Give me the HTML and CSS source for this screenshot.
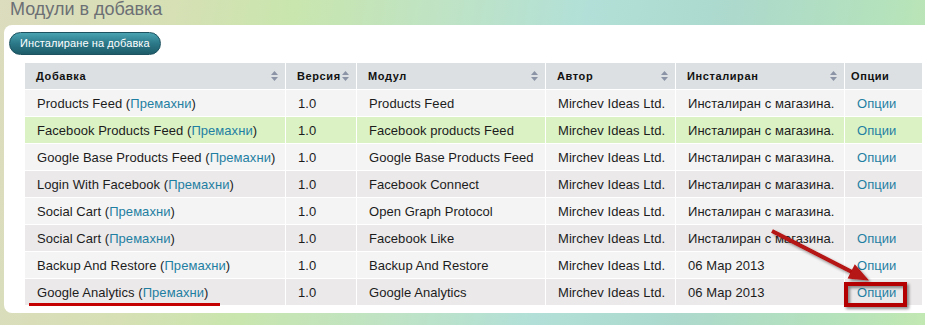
FILE: index.html
```html
<!DOCTYPE html>
<html lang="bg">
<head>
<meta charset="utf-8">
<title>Модули в добавка</title>
<link rel="stylesheet" href="styles.css">
</head>
<body>
<div class="page">
  <h1 class="title">Модули в добавка</h1>
  <div class="panel">
    <button class="btn" type="button">Инсталиране на добавка</button>
    <table class="grid">
      <colgroup>
        <col class="c1"><col class="c2"><col class="c3"><col class="c4"><col class="c5"><col class="c6">
      </colgroup>
      <thead>
        <tr>
          <th><div class="th-in"><span>Добавка</span><svg class="sort" viewBox="0 0 7 10" width="7" height="10"><path d="M3.5 0L7 4H0Z M0 6H7L3.5 10Z"/></svg></div></th>
          <th><div class="th-in"><span>Версия</span><svg class="sort" viewBox="0 0 7 10" width="7" height="10"><path d="M3.5 0L7 4H0Z M0 6H7L3.5 10Z"/></svg></div></th>
          <th><div class="th-in"><span>Модул</span><svg class="sort" viewBox="0 0 7 10" width="7" height="10"><path d="M3.5 0L7 4H0Z M0 6H7L3.5 10Z"/></svg></div></th>
          <th><div class="th-in"><span>Автор</span><svg class="sort" viewBox="0 0 7 10" width="7" height="10"><path d="M3.5 0L7 4H0Z M0 6H7L3.5 10Z"/></svg></div></th>
          <th><div class="th-in"><span>Инсталиран</span><svg class="sort" viewBox="0 0 7 10" width="7" height="10"><path d="M3.5 0L7 4H0Z M0 6H7L3.5 10Z"/></svg></div></th>
          <th class="opt-h"><div class="th-in"><span>Опции</span></div></th>
        </tr>
      </thead>
      <tbody>
        <tr><td>Products Feed (<a href="#">Премахни</a>)</td><td>1.0</td><td>Products Feed</td><td>Mirchev Ideas Ltd.</td><td>Инсталиран с магазина.</td><td><a href="#">Опции</a></td></tr>
        <tr class="hl"><td>Facebook Products Feed (<a href="#">Премахни</a>)</td><td>1.0</td><td>Facebook products Feed</td><td>Mirchev Ideas Ltd.</td><td>Инсталиран с магазина.</td><td><a href="#">Опции</a></td></tr>
        <tr><td>Google Base Products Feed (<a href="#">Премахни</a>)</td><td>1.0</td><td>Google Base Products Feed</td><td>Mirchev Ideas Ltd.</td><td>Инсталиран с магазина.</td><td><a href="#">Опции</a></td></tr>
        <tr><td>Login With Facebook (<a href="#">Премахни</a>)</td><td>1.0</td><td>Facebook Connect</td><td>Mirchev Ideas Ltd.</td><td>Инсталиран с магазина.</td><td><a href="#">Опции</a></td></tr>
        <tr><td>Social Cart (<a href="#">Премахни</a>)</td><td>1.0</td><td>Open Graph Protocol</td><td>Mirchev Ideas Ltd.</td><td>Инсталиран с магазина.</td><td></td></tr>
        <tr><td>Social Cart (<a href="#">Премахни</a>)</td><td>1.0</td><td>Facebook Like</td><td>Mirchev Ideas Ltd.</td><td>Инсталиран с магазина.</td><td><a href="#">Опции</a></td></tr>
        <tr><td>Backup And Restore (<a href="#">Премахни</a>)</td><td>1.0</td><td>Backup And Restore</td><td>Mirchev Ideas Ltd.</td><td>06 Мар 2013</td><td><a href="#">Опции</a></td></tr>
        <tr><td>Google Analytics (<a href="#">Премахни</a>)</td><td>1.0</td><td>Google Analytics</td><td>Mirchev Ideas Ltd.</td><td>06 Мар 2013</td><td><a href="#">Опции</a></td></tr>
      </tbody>
    </table>
  </div>
  <svg class="annot" width="925" height="325" viewBox="0 0 925 325">
    <defs>
      <filter id="sh" x="-20%" y="-20%" width="150%" height="160%">
        <feGaussianBlur in="SourceAlpha" stdDeviation="1.6"/>
        <feOffset dx="2" dy="2" result="b"/>
        <feComponentTransfer><feFuncA type="linear" slope="0.45"/></feComponentTransfer>
        <feMerge><feMergeNode/><feMergeNode in="SourceGraphic"/></feMerge>
      </filter>
    </defs>
    <line x1="29" y1="304.5" x2="220" y2="304.5" stroke="#c40000" stroke-width="3"/>
    <g filter="url(#sh)">
      <line x1="772" y1="231" x2="852" y2="272" stroke="#b51212" stroke-width="4"/>
      <polygon points="869,280.5 847.6,278.5 854.8,264.3" fill="#b51212"/>
      <rect x="846" y="284" width="59" height="21" fill="none" stroke="#b40000" stroke-width="4"/>
    </g>
  </svg>
</div>
</body>
</html>
```

FILE: styles.css
```css
html, body {
  margin: 0;
  padding: 0;
}
body {
  width: 925px;
  height: 325px;
  overflow: hidden;
  font-family: "Liberation Sans", Arial, sans-serif;
  background: linear-gradient(100deg, #dcdcbe 0%, #d6e0b4 18%, #c9e6ae 30%, #bfe3c4 45%, #b2e0d8 60%, #acd9cc 75%, #b4e2bc 90%, #c2e8b2 100%);
}
.page {
  position: relative;
  width: 925px;
  height: 325px;
  overflow: hidden;
}
.title {
  margin: -1px 0 0 10px;
  height: 26px;
  font-size: 18px;
  line-height: 20px;
  font-weight: normal;
  color: #6c7075;
}
.panel {
  margin: 0 -10px 0 4px;
  height: 288px;
  box-sizing: border-box;
  padding: 7px 0 0 5px;
  background: #fff;
  border-radius: 8px;
}
.btn {
  display: block;
  height: 23px;
  padding: 0 10px;
  border: 1px solid #1d5260;
  border-radius: 12px;
  background: linear-gradient(#4aa3b1, #2b7888 50%, #1e5c69);
  color: #fff;
  font-family: "Liberation Sans", Arial, sans-serif;
  font-size: 11px;
  line-height: 21px;
  letter-spacing: 0.1px;
}
.grid {
  margin: 8px 0 0 16px;
  width: 898px;
  table-layout: fixed;
  border-collapse: separate;
  border-spacing: 0;
  font-size: 13px;
  color: #1c1c1c;
}
.c1 { width: 261px; }
.c2 { width: 71px; }
.c3 { width: 189px; }
.c4 { width: 130px; }
.c5 { width: 169px; }
.c6 { width: 78px; }
.grid th, .grid td {
  height: 26px;
  padding: 0 0 0 12px;
  border-right: 1px solid #fff;
  border-bottom: 1px solid #fff;
  white-space: nowrap;
  overflow: hidden;
  text-align: left;
  vertical-align: middle;
}
.grid th {
  padding: 0 7px 0 11px;
  background: #dce0e3;
  font-size: 11px;
  letter-spacing: 0.6px;
  color: #111;
}
.grid th.opt-h {
  padding-left: 6px;
}
.th-in {
  display: flex;
  align-items: center;
  justify-content: space-between;
}
.sort {
  fill: #8a94a6;
  flex: none;
}
.grid td {
  letter-spacing: 0.05px;
}
.grid tbody tr:nth-child(odd) td { background: #f4f4f4; }
.grid tbody tr:nth-child(even) td { background: #ebe9ea; }
.grid tbody tr.hl td { background: #dbf2c5; }
.grid a {
  color: #1f7fa2;
  text-decoration: none;
}
.annot {
  position: absolute;
  left: 0;
  top: 0;
  pointer-events: none;
}
```
